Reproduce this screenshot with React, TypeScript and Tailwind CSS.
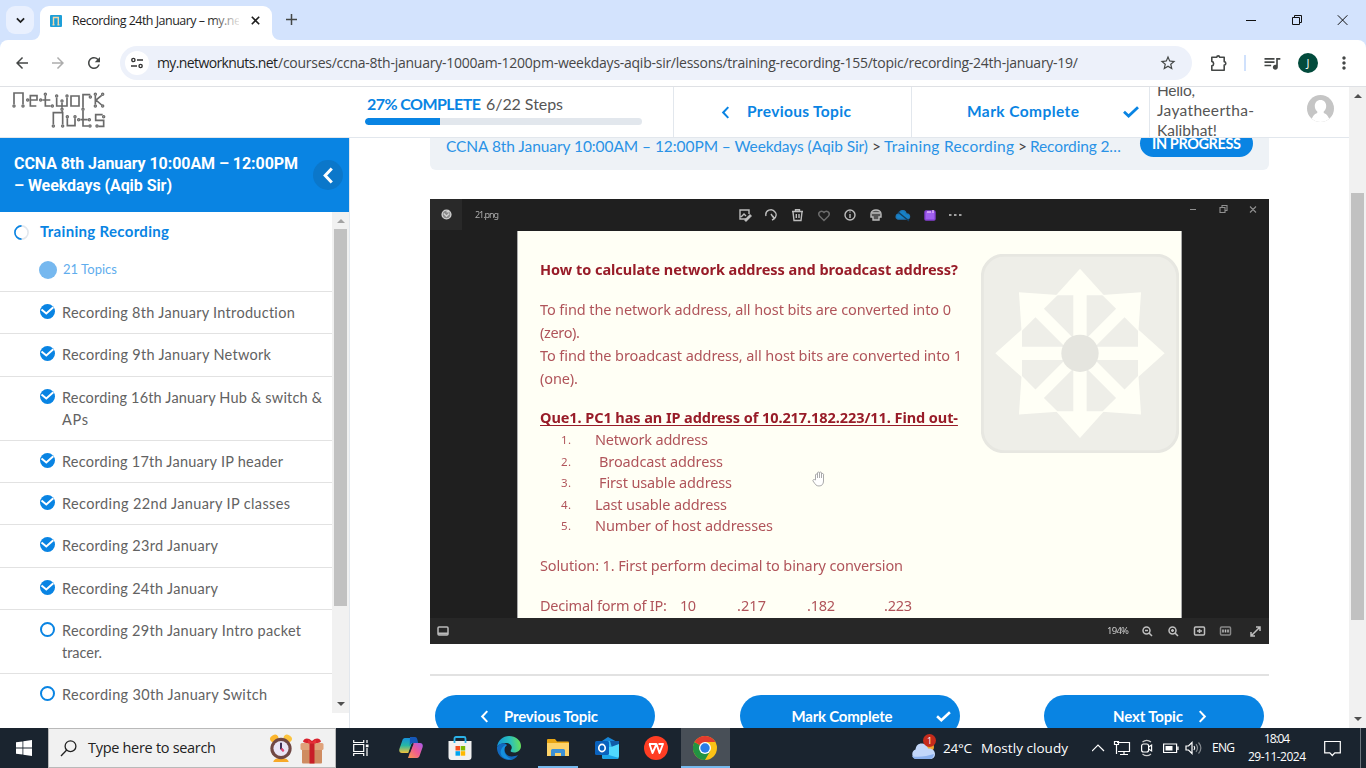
import React, { useLayoutEffect, useRef, useState } from "react";
import {
  MdArrowBack,
  MdArrowForward,
  MdRefresh,
  MdStarBorder,
  MdQueueMusic,
  MdMoreVert,
} from "react-icons/md";

/* Single line of text spread evenly over a given width. */
function Fit({ w, className = "", children }: { w: number; className?: string; children: string }) {
  const ref = useRef<HTMLSpanElement>(null);
  const [spacing, setSpacing] = useState(0);
  useLayoutEffect(() => {
    if (ref.current) {
      const natural = ref.current.getBoundingClientRect().width - spacing * children.length;
      setSpacing((w - natural) / Math.max(1, children.length - 1));
    }
  }, [w, children]);
  return (
    <span className={`inline-block shrink-0 whitespace-pre ${className}`} style={{ width: w }}>
      <span ref={ref} style={{ letterSpacing: spacing }}>
        {children}
      </span>
    </span>
  );
}

function Chevron({ dir, className }: { dir: "left" | "right"; className: string }) {
  return (
    <svg viewBox="0 0 9 14" className={className} fill="none" stroke="currentColor" strokeWidth="2.2">
      <path d={dir === "left" ? "M7.5 1.2 2 7l5.5 5.8" : "M1.5 1.2 7 7l-5.5 5.8"} />
    </svg>
  );
}

function Check({ className }: { className: string }) {
  return (
    <svg viewBox="0 0 16 12" className={className} fill="none" stroke="currentColor" strokeWidth="2.8">
      <path d="M1 5.8 5.6 10 15 1.3" />
    </svg>
  );
}

function TabStrip() {
  return (
    <div className="flex h-10 shrink-0 bg-[#d3e3fd]">
      <div className="ml-1.5 mt-1.5 flex h-7 w-7 items-center justify-center rounded-[9px] bg-[#e9f0fe]">
        <svg viewBox="0 0 10 7" className="h-[7px] w-[9px]" fill="none" stroke="#1f1f1f" strokeWidth="2">
          <path d="M1 1.2 5 5.2 9 1.2" />
        </svg>
      </div>
      <svg viewBox="0 0 8 8" className="-ml-0.5 h-2 w-2 self-end" fill="#fff">
        <path d="M8 0v8H0a8 8 0 0 0 8-8z" />
      </svg>
      <div className="mt-1.5 flex w-[232px] items-center rounded-t-[9px] bg-white pb-[5px] pl-[10px]">
        <svg viewBox="0 0 12 12" className="h-3 w-3" fill="none">
          <rect width="12" height="12" rx="1" fill="#1d9fd8" />
          <path d="M3.500 9.700V2.500h4.800v7.200M2.500 9.700h2M7.400 9.700h2" stroke="#f3d6a8" strokeWidth="1.4" />
        </svg>
        <div className="relative ml-[10px] h-4 w-[167px] overflow-hidden text-[12.5px] leading-4 text-[#1f1f1f]">
          <Fit w={169}>Recording 24th January – my.ne</Fit>
          <div className="absolute inset-y-0 right-0 w-7 bg-gradient-to-r from-white/0 to-white/90" />
        </div>
        <svg viewBox="0 0 9 9" className="ml-[12px] h-[9px] w-[9px]" stroke="#1f1f1f" strokeWidth="1.6">
          <path d="M.8.8l7.4 7.4M8.2.8.8 8.2" />
        </svg>
      </div>
      <svg viewBox="0 0 8 8" className="h-2 w-2 self-end" fill="#fff">
        <path d="M0 0v8h8a8 8 0 0 1-8-8z" />
      </svg>
      <svg viewBox="0 0 11 11" className="ml-[6px] mt-[14px] h-[11px] w-[11px]" stroke="#444746" strokeWidth="1.5">
        <path d="M5.500 0v11M0 5.500h11" />
      </svg>
      <div className="ml-auto flex items-center pr-[18px]">
        <svg viewBox="0 0 102 12" className="h-3 w-[102px]" fill="none" stroke="#111" strokeWidth="1">
          <path d="M0 6.500h10M46.500 3.500h7v7h-7zM48.500 3.500v-2h7v7h-2M91.800 1.300l9.600 9.600M101.400 1.300l-9.600 9.600" />
        </svg>
      </div>
    </div>
  );
}

function Toolbar() {
  return (
    <div className="h-[47px] shrink-0 bg-[#d3e3fd]">
      <div className="flex h-[47px] items-center rounded-t-lg border-b border-[#dfe1e5] bg-white">
        <MdArrowBack className="ml-[13px] h-[18px] w-[18px] text-[#444746]" />
        <MdArrowForward className="ml-[18px] h-[18px] w-[18px] text-[#adadad]" />
        <MdRefresh className="ml-[18px] h-[18px] w-[18px] text-[#444746]" />
        <div className="ml-[17px] flex h-[34px] w-[1072px] items-center rounded-full bg-[#edf1fa] pl-[5px]">
          <div className="flex h-6 w-6 items-center justify-center rounded-full bg-white">
            <svg viewBox="0 0 12 12" className="h-3 w-3" fill="none" stroke="#333" strokeWidth="1.4">
              <circle cx="2.4" cy="3" r="1.6" />
              <circle cx="9.6" cy="9" r="1.6" />
              <path d="M6 3h6M0 9h6" />
            </svg>
          </div>
          <div className="ml-2 flex text-[14px] leading-5">
            <Fit w={121} className="text-[#1f1f1f]">my.networknuts.net</Fit>
            <Fit w={800} className="text-[#474747]">
              /courses/ccna-8th-january-1000am-1200pm-weekdays-aqib-sir/lessons/training-recording-155/topic/recording-24th-january-19/
            </Fit>
          </div>
          <MdStarBorder className="ml-auto mr-[15px] h-[18px] w-[18px] text-[#444746]" />
        </div>
        <svg viewBox="0 0 18 18" className="ml-[18px] h-[18px] w-[18px]" fill="none" stroke="#444746" strokeWidth="1.6" strokeLinejoin="round">
          <path d="M1.800 3.300h5a1.400 1.400 0 0 1 2.800 0h4.600v4.500a1.600 1.600 0 0 1 0 3.200v5.200H1.800v-4.300a2.300 2.300 0 0 0 0-4.500z" />
        </svg>
        <div className="ml-4 h-4 w-[2px] bg-[#d0e1fc]" />
        <MdQueueMusic className="ml-[16px] h-5 w-5 text-[#444746]" />
        <div className="ml-[16px] flex h-5 w-5 items-center justify-center rounded-full bg-[#024b3c] text-[11px] text-white">J</div>
        <MdMoreVert className="ml-4 h-5 w-5 text-[#444746]" />
      </div>
    </div>
  );
}

function Logo() {
  const nodes = [
    [42, 318], [69, 318], [83, 300], [122, 300], [136, 283], [157, 318], [170, 288], [186, 303], [201, 288],
    [186, 328], [249, 328], [271, 291], [286, 283], [308, 283], [308, 318], [286, 318],
    [160, 378], [188, 378], [202, 350], [225, 350], [236, 359], [268, 359], [270, 378], [291, 378], [311, 350],
  ];
  return (
    <svg viewBox="30 270 300 120" className="h-10 w-[100px]" fill="none" stroke="#6a6a6a" strokeWidth="5">
      <path d="M42 313v-34h27v34M88 300h23v-13H91v31h18M127 300h24M136 288v30h16M170 293v25h31v-25M186 308v15M213 288h24v30h-24zM249 323v-39h22M286 288v25M305 286l-17 14 17 15" />
      <path d="M160 373v-35h28v35M188 338l-2-6M202 355v22h23v-22M249 333v45h17M241 359h22M308 344h-21v17h24v18h-16" />
      {nodes.map(([x, y], i) => (
        <circle key={i} cx={x} cy={y} r="3.4" fill="#bbb" strokeWidth="3.6" />
      ))}
    </svg>
  );
}

function SiteHeader() {
  return (
    <div className="flex h-[51px] shrink-0 overflow-hidden border-b border-[#e2e7ed] bg-white text-[#555]">
      <div className="w-[365px] overflow-hidden pl-[10px] pt-[3px]">
        <Logo />
      </div>
      <div className="w-[308px] pt-[7px]">
        <div className="flex h-5 pl-[2px] text-[16px] leading-5">
          <Fit w={114} className="mr-[5px] font-bold text-[#0984e3]">27% COMPLETE</Fit>
          <Fit w={77}>6/22 Steps</Fit>
        </div>
        <div className="mt-1 h-[7px] w-[277px] overflow-hidden rounded-full bg-[#e2e7ed]">
          <div className="h-full w-[75px] rounded-l-full bg-[#0984e3]" />
        </div>
      </div>
      <div className="flex w-[238px] items-center border-l border-[#e2e7ed] pl-[47px] font-bold text-[#0984e3]">
        <Chevron dir="left" className="h-[13px] w-[9px]" />
        <Fit w={104} className="ml-[17px] text-[15.5px]">Previous Topic</Fit>
      </div>
      <div className="flex w-[238px] items-center border-l border-[#e2e7ed] pl-[55px] font-bold text-[#0984e3]">
        <Fit w={112} className="text-[15.5px]">Mark Complete</Fit>
        <Check className="ml-[44px] h-3 w-4" />
      </div>
      <div className="flex w-[200px] items-start border-l border-[#e2e7ed] pl-[7px] text-[15.5px] leading-5">
        <div className="-mt-[7px] flex flex-col">
          <Fit w={38}>Hello,</Fit>
          <Fit w={97}>Jayatheertha-</Fit>
          <Fit w={60}>Kalibhat!</Fit>
        </div>
        <svg viewBox="0 0 26 26" className="ml-[53px] mt-[8px] h-[27px] w-[27px] shrink-0">
          <clipPath id="avatar"><circle cx="13" cy="13" r="13" /></clipPath>
          <g clipPath="url(#avatar)">
            <rect width="26" height="26" fill="#c5c5c5" />
            <path d="M13 4.800c-3.500 0-5.500 2.600-5.500 5.700 0 2.300 1 4.200 2.400 5.300v1.500C7 18.600 4.600 20.500 3.600 27h18.800c-1-6.500-3.400-8.400-6.300-9.700v-1.500c1.400-1.100 2.400-3 2.400-5.300 0-3.100-2-5.700-5.500-5.700z" fill="#fff" />
          </g>
        </svg>
      </div>
    </div>
  );
}

type Topic = { lines: [string, number][]; done: boolean; box: string };
const topics: Topic[] = [
  { lines: [["Recording 8th January Introduction", 233]], done: true, box: "h-[42px] border-b" },
  { lines: [["Recording 9th January Network", 209]], done: true, box: "h-[43px] border-b" },
  { lines: [["Recording 16th January Hub & switch &", 260], ["APs", 26]], done: true, box: "h-16 border-b" },
  { lines: [["Recording 17th January IP header", 221]], done: true, box: "h-[42px] border-b" },
  { lines: [["Recording 22nd January IP classes", 228]], done: true, box: "h-[42px] border-b" },
  { lines: [["Recording 23rd January", 156]], done: true, box: "h-[43px] border-b" },
  { lines: [["Recording 24th January", 156]], done: true, box: "h-[42px] border-b" },
  { lines: [["Recording 29th January Intro packet", 239], ["tracer.", 40]], done: false, box: "h-16 border-b" },
  { lines: [["Recording 30th January Switch", 205]], done: false, box: "h-[39px]" },
];

function Sidebar() {
  return (
    <div className="flex w-[350px] shrink-0 flex-col border-r border-[#e2e7ed]">
      <div className="flex h-[74px] shrink-0 items-center bg-[#0984e3] pl-[14px] font-['Roboto',sans-serif] text-[16px] font-bold leading-[22px] text-white">
        <div className="flex w-[299px] flex-col">
          <Fit w={284}>CCNA 8th January 10:00AM – 12:00PM</Fit>
          <Fit w={158}>– Weekdays (Aqib Sir)</Fit>
        </div>
        <div className="flex h-[30px] w-[30px] items-center justify-center rounded-full bg-[#0b77ca]">
          <svg viewBox="0 0 12 18" className="h-[17px] w-[12px]" fill="none" stroke="#fff" strokeWidth="3.2">
            <path d="M10 1.500 3 9l7 7.500" />
          </svg>
        </div>
      </div>
      <div className="flex h-[501px]">
        <div className="w-[332px] overflow-hidden">
          <div className="h-20 border-b border-[#e2e2e2] pt-[8px]">
            <div className="flex h-[22px] items-center pl-[14px]">
              <svg viewBox="0 0 15 15" className="mt-[2px] h-[15px] w-[15px]" fill="none" strokeWidth="1.6">
                <circle cx="7.500" cy="7.500" r="6.600" stroke="#e2e7ed" />
                <path d="M7.500 14.100a6.600 6.600 0 0 1 0-13.200" stroke="#0984e3" />
              </svg>
              <Fit w={129} className="ml-[11px] text-[15px] font-bold text-[#0984e3]">Training Recording</Fit>
            </div>
            <div className="mt-[17px] flex h-[22px] items-center pl-[39px]">
              <div className="h-[18px] w-[18px] rounded-full bg-[#76b8ef]" />
              <Fit w={54} className="ml-[6px] text-[13px] text-[#5faded]">21 Topics</Fit>
            </div>
          </div>
          {topics.map((t) => (
            <div key={t.lines[0][0]} className={`flex border-[#e2e2e2] pl-10 pt-[10px] ${t.box}`}>
              <svg viewBox="0 0 15 15" className="mt-[2px] h-[15px] w-[15px] shrink-0" fill="none">
                {t.done ? (
                  <>
                    <circle cx="7.500" cy="7.500" r="7.500" fill="#0984e3" />
                    <path d="M1.500 5.500 6.300 9.500 13.300 3.200" stroke="#fff" strokeWidth="2" />
                  </>
                ) : (
                  <circle cx="7.500" cy="7.500" r="6.500" stroke="#0984e3" strokeWidth="2" />
                )}
              </svg>
              <div className="ml-[7px] flex flex-col text-[14.5px] leading-[21.5px] text-[#626262]">
                {t.lines.map(([text, w]) => (
                  <Fit key={text} w={w}>{text}</Fit>
                ))}
              </div>
            </div>
          ))}
        </div>
        <div className="flex w-[17px] flex-col items-center bg-[#f1f1f1]">
          <svg viewBox="0 0 8 4" className="mt-[7px] h-1 w-2 shrink-0" fill="#a3a3a3"><path d="M0 4 4 0l4 4z" /></svg>
          <div className="mt-[6px] h-[377px] w-[13px] shrink-0 bg-[#c1c1c1]" />
          <svg viewBox="0 0 8 4" className="mt-[96px] h-1 w-2 shrink-0" fill="#505050"><path d="M0 0h8L4 4z" /></svg>
        </div>
      </div>
    </div>
  );
}

const steps: [string, string, number, string][] = [
  ["1.", "Network address", 113, "pl-[24px]"],
  ["2.", "Broadcast address", 124, "pl-[28px]"],
  ["3.", "First usable address", 133, "pl-[28px]"],
  ["4.", "Last usable address", 132, "pl-[24px]"],
  ["5.", "Number of host addresses", 178, "pl-[24px]"],
];

function Watermark() {
  return (
    <svg viewBox="425 178 594 597" className="h-[199px] w-[198px]">
      <rect x="429" y="182" width="586" height="589" rx="64" fill="#eeeee8" stroke="#e7e7e1" strokeWidth="9" />
      {[0, 90, 180, 270].map((a) => (
        <path key={a} transform={`rotate(${a} 722 476)`} d="M722 222l72 80h-52v160h-40V302h-52z" fill="#fffff6" />
      ))}
      {[45, 135, 225, 315].map((a) => (
        <path key={a} transform={`rotate(${a} 722 476)`} d="M722 217l77 88h-59v160h-36V305h-59z" fill="#fffff6" />
      ))}
      <circle cx="722" cy="476" r="56" fill="#e5e5df" />
    </svg>
  );
}

function Slide() {
  return (
    <div className="relative h-[387px] w-[663px] overflow-hidden bg-[#fffff5] pl-[22px] text-[14.5px] leading-[23px] text-[#b0545a]">
      <div className="flex h-[387px] flex-col pt-[27px] blur-[0.7px]">
        <Fit w={418} className="h-[23px] font-bold text-[#981c28]">How to calculate network address and broadcast address?</Fit>
        <Fit w={411} className="mt-[17px] h-[23px]">To find the network address, all host bits are converted into 0</Fit>
        <Fit w={40} className="h-[23px]">(zero).</Fit>
        <Fit w={422} className="h-[23px]">To find the broadcast address, all host bits are converted into 1</Fit>
        <Fit w={38} className="h-[23px]">(one).</Fit>
        <Fit w={418} className="mt-[16px] h-[23px] font-bold text-[#981c28] underline underline-offset-2">
          Que1. PC1 has an IP address of 10.217.182.223/11. Find out-
        </Fit>
        {steps.map(([n, text, w, pad]) => (
          <div key={n} className="flex h-[21.5px] pl-[21px] leading-[21.5px]">
            <Fit w={10} className="text-[11.5px]">{n}</Fit>
            <div className={pad}><Fit w={w}>{text}</Fit></div>
          </div>
        ))}
        <Fit w={363} className="mt-[17px] h-[23px]">Solution: 1. First perform decimal to binary conversion</Fit>
        <div className="mt-[17px] flex">
          <Fit w={127}>Decimal form of IP:</Fit>
          <Fit w={16} className="ml-[13px]">10</Fit>
          <Fit w={29} className="ml-[41px]">.217</Fit>
          <Fit w={28} className="ml-[41px]">.182</Fit>
          <Fit w={28} className="ml-[49px]">.223</Fit>
        </div>
      </div>
      <div className="absolute left-[463px] top-[23px] blur-[0.7px]"><Watermark /></div>
      <svg viewBox="0 0 14 16" className="absolute left-[294px] top-[240px] h-4 w-[14px] blur-[0.6px]" fill="#fff" stroke="#aaa" strokeWidth="1">
        <path d="M3.500 9V4a1 1 0 0 1 2 0V2a1 1 0 0 1 2 0 1 1 0 0 1 2 0v1a1 1 0 0 1 2 1v6c0 3-1.500 5-4.500 5S3.500 13.500 1 10c-.6-1.300 1-2 2.500-1zM5.500 4v3M7.500 2v5M9.500 3v4" />
      </svg>
    </div>
  );
}

function Video() {
  return (
    <div className="flex h-[445px] w-[839px] flex-col bg-[#1f1f1f] font-['Noto_Sans','Open_Sans',sans-serif]">
      <div className="relative flex h-8 shrink-0">
        <div className="flex h-[31px] w-8 items-center justify-center bg-[#292929]">
          <svg viewBox="0 0 12 12" className="h-[11px] w-[11px] blur-[0.6px]" fill="#888" stroke="#d0d0d0" strokeWidth="1.5">
            <circle cx="6" cy="6" r="4.800" /><path d="M3 5l3 3 3-3M6 3h3" />
          </svg>
        </div>
        <Fit w={24} className="ml-[13px] text-[9px] leading-8 text-[#aaa] blur-[0.7px]">21.png</Fit>
        <svg viewBox="0 0 224 14" className="ml-[239px] mt-[9px] h-[14px] w-[224px] blur-[0.6px]" fill="none" stroke="#bcbcbc" strokeWidth="1.4">
          <path d="M8 11H2V2h9v4M3 9l3-3 2 2" /><path d="M7 12l5-5 1 1-5 5z" fill="#ddd" />
          <path d="M28 8a5 5 0 0 1 9-4c2 2 1 5-1 7M34 12l2-1-1-3M33 6l2 3" />
          <path d="M54 3.500h11M57.500 3V1.800h4V3M55 4l1 8.500h7L64 4M58.300 6v4M61 6v4" />
          <path d="M86 12.500 81.500 8C79 4.500 83.500 1.500 86 4.500 88.500 1.500 93 4.500 90.500 8z" stroke="#6b6b6b" />
          <circle cx="112" cy="7" r="5" /><path d="M112 6v4M112 3.500v1" />
          <path d="M133 6a5 4 0 0 1 10 0v3h-2v3h-6V9h-2zM134 5h8" fill="#555" />
          <path d="M160 11c-3-1-2-5 1-5 1-5 7-4 7 0 4-1 5 5 1 5z" fill="#1683c9" stroke="#1f77b7" /><path d="M160 4l11 9" stroke="#163d5c" />
          <rect x="187" y="3" width="10" height="9" rx="1" fill="#a060ee" stroke="#8742d6" /><path d="M189 4h4M195 2v3" stroke="#e1b6fa" />
          <path d="M211 7h2.500M216 7h2.500M221 7h2.500" stroke="#ccc" strokeWidth="1.7" />
        </svg>
        <svg viewBox="0 0 68 10" className="ml-[228px] mt-[5px] h-[10px] w-[68px] blur-[0.5px]" fill="none" stroke="#909090" strokeWidth="1.1">
          <path d="M0 5.500h6M30 3.500h5v5h-5zM32 3V1.500h5v5h-2M60 2.500l6 6M66 2.500l-6 6" />
        </svg>
      </div>
      <div className="ml-[87px] w-[665px] border-x border-[#aaa]"><Slide /></div>
      <div className="flex h-[26px] shrink-0 items-center bg-[#272727] pl-[7px]">
        <svg viewBox="0 0 12 10" className="h-[10px] w-3 blur-[0.5px]" fill="none" stroke="#bbb" strokeWidth="1.500"><rect x="1" y="1" width="10" height="8" rx="1" /><path d="M1 7.500h10" strokeWidth="2" /></svg>
        <Fit w={22} className="ml-[658px] text-[9.5px] text-[#ccc] blur-[0.6px]">194%</Fit>
        <svg viewBox="0 0 122 14" className="ml-[11px] h-[14px] w-[122px] blur-[0.5px]" fill="none" stroke="#c0c0c0" strokeWidth="1.5">
          <circle cx="6.500" cy="6.500" r="3.500" /><path d="M9 9l3 3M5 6.500h3" />
          <circle cx="32.500" cy="6.500" r="3.500" /><path d="M35 9l3 3M31 6.500h3M32.500 5v3" />
          <rect x="54.500" y="3" width="10" height="8" rx="1" /><path d="M57 7h5M59.500 5v4" />
          <rect x="80.500" y="3" width="10" height="8" rx="1" stroke="#888" /><path d="M83 5.500v3M88 5.500v3M85.500 5.500v3" />
          <path d="M111 8v4h4M116 3h4v4M111.500 11.500l8-8" />
        </svg>
      </div>
    </div>
  );
}

function Main() {
  return (
    <div className="flex w-[999px] shrink-0 flex-col overflow-hidden pl-20">
      <div className="flex h-8 w-[839px] shrink-0 rounded-b-md bg-[#eef2f6] pl-4 text-[15.5px] leading-5 text-[#444]">
        <div className="-mt-[2px] flex w-[694px] text-[#2a92e6]">
          <Fit w={422}>CCNA 8th January 10:00AM – 12:00PM – Weekdays (Aqib Sir)</Fit>
          <Fit w={8} className="mx-[4px] text-[#444]">&gt;</Fit>
          <Fit w={130}>Training Recording</Fit>
          <Fit w={8} className="mx-[4px] text-[#444]">&gt;</Fit>
          <Fit w={91}>Recording 2…</Fit>
        </div>
        <div className="-mt-2 flex h-[27px] w-[113px] items-center justify-center rounded-full bg-[#0984e3] text-[14.5px] font-bold text-white">
          <Fit w={89}>IN PROGRESS</Fit>
        </div>
      </div>
      <div className="mt-[29px]"><Video /></div>
      <div className="mt-[30px] h-[2px] w-[839px] shrink-0 bg-[#e2e2e2]" />
      <div className="ml-[5px] mt-[19px] flex w-[829px] shrink-0 justify-between text-[15px] font-bold text-white">
        <div className="flex h-[42px] w-[220px] items-center rounded-full bg-[#0984e3] pl-[45px]">
          <Chevron dir="left" className="h-[13px] w-[9px]" />
          <Fit w={94} className="ml-[15px]">Previous Topic</Fit>
        </div>
        <div className="flex h-[42px] w-[220px] items-center rounded-full bg-[#0984e3] pl-[52px]">
          <Fit w={101}>Mark Complete</Fit>
          <Check className="ml-[43px] mt-px h-[11px] w-[15px]" />
        </div>
        <div className="flex h-[42px] w-[220px] items-center rounded-full bg-[#0984e3] pl-[69px]">
          <Fit w={70}>Next Topic</Fit>
          <Chevron dir="right" className="ml-[15px] h-[13px] w-[9px]" />
        </div>
      </div>
    </div>
  );
}

function AlarmClock() {
  return (
    <svg viewBox="0 0 24 30" className="h-[29px] w-[24px]">
      <ellipse cx="5" cy="4.500" rx="4.500" ry="3.500" fill="#fbb52d" transform="rotate(-30 5 4.500)" />
      <ellipse cx="19" cy="4.500" rx="4.500" ry="3.500" fill="#fbc33d" transform="rotate(30 19 4.500)" />
      <path d="M4 29c1-4 4-4 8-4s7 0 8 4z" fill="#f7a928" />
      <circle cx="12" cy="15" r="11" fill="#704744" />
      <circle cx="12" cy="15" r="7.800" fill="#e9e4f5" />
      <path d="M12 9v6l2.500 2.500" fill="none" stroke="#3b2b50" strokeWidth="2" />
      <path d="M12.500 15l2.300 3" stroke="#f04472" strokeWidth="2" />
    </svg>
  );
}

function Gift() {
  return (
    <svg viewBox="0 0 24 26" className="h-[26px] w-[24px]">
      <path d="M12 6C8 5 4 5 3 3.500 4 0 8-1 12 3c4-4 8-3 9 .500C20 5 16 5 12 6z" fill="#d9232e" />
      <rect x="2" y="9" width="20" height="16.500" rx="1" fill="#cf8c61" />
      <rect x=".5" y="5" width="23" height="7" rx="1.500" fill="#e0a27a" />
      <path d="M9.500 4.500h5v21h-5z" fill="#c81e28" />
      <path d="M8 1.500l4 3 4-3v4H8z" fill="#e8323a" />
    </svg>
  );
}

const apps: { id: string; cell: string; bar: string; icon: React.ReactNode }[] = [
  {
    id: "copilot", cell: "", bar: "",
    icon: (
      <svg viewBox="0 0 24 22" className="h-[22px] w-6">
        <defs>
          <linearGradient id="ca" x1="0" y1="0" x2="0" y2="1"><stop offset="0" stopColor="#1691dc" /><stop offset=".5" stopColor="#28b8a2" /><stop offset="1" stopColor="#f4c33a" /></linearGradient>
          <linearGradient id="cb" x1="1" y1="0" x2="0" y2="1"><stop offset="0" stopColor="#a75af0" /><stop offset=".5" stopColor="#ef5b91" /><stop offset="1" stopColor="#fb9a4b" /></linearGradient>
        </defs>
        <path d="M7 1h8l-4.500 13c-.5 1.500-1 2-2.500 2H3c-2.500 0-3.300-2-2.500-4.500L3.500 3C4 1.500 5 1 7 1z" fill="url(#ca)" />
        <path d="M11 0h5c1.500 0 2 1 2.500 3l.7 3h-5c-2 0-3 1-3.500 3z" fill="#1557b8" />
        <path d="M17 21H9l4.500-13c.5-1.500 1-2 2.500-2h5c2.500 0 3.300 2 2.500 4.500L20.500 19c-.5 1.500-1.500 2-3.500 2z" fill="url(#cb)" />
        <path d="M9.500 15.500 12.500 7l2 0-3.500 9z" fill="#1a242f" />
      </svg>
    ),
  },
  {
    id: "store", cell: "", bar: "",
    icon: (
      <svg viewBox="0 0 24 24" className="h-6 w-6">
        <path d="M.5 5h23v16a3 3 0 0 1-3 3h-17a3 3 0 0 1-3-3z" fill="#f1f1f1" />
        <path d="M6.500 7V2.500a1.500 1.500 0 0 1 1.500-1.500h8a1.500 1.500 0 0 1 1.500 1.500V7" fill="none" stroke="#2bb2e8" strokeWidth="1.800" />
        <path d="M7.500 10H12v4.500H7.500z" fill="#f25022" /><path d="M12.700 10h4.500v4.500h-4.500z" fill="#7fba00" />
        <path d="M7.500 15.200H12v4.500H7.500z" fill="#00a4ef" /><path d="M12.700 15.200h4.500v4.500h-4.500z" fill="#ffb900" />
      </svg>
    ),
  },
  {
    id: "edge", cell: "", bar: "",
    icon: (
      <svg viewBox="0 0 24 24" className="h-6 w-6">
        <defs>
          <linearGradient id="ea" x1="0" y1=".4" x2="1" y2=".3"><stop offset="0" stopColor="#1295d8" /><stop offset=".55" stopColor="#2ac0bd" /><stop offset="1" stopColor="#6be254" /></linearGradient>
        </defs>
        <path d="M0 11C1 4 6 0 12 0c7 0 12 4.500 12 10 0 4-3 6.500-7 6.500-3 0-4-1-3-2.500 2-3 0-7-5-7-4 0-8 2-9 4z" fill="url(#ea)" />
        <path d="M0 11c2-4 8-5 10-2-2 1-3 4-2 7 1.500 4 6 6 13 3-2 3.500-5 5-9 5C5 24-.5 18 0 11z" fill="#1269bd" />
        <path d="M10 9c-3 2-4 6-1 10 2 3 5 4.500 8 4C8 25 2 20 4 14c1-3 3-5 6-5z" fill="#1490df" />
      </svg>
    ),
  },
  {
    id: "explorer", cell: "", bar: "w-10",
    icon: (
      <svg viewBox="0 0 22 20" className="h-5 w-[22px]">
        <path d="M0 2a1 1 0 0 1 1-1h7l2 2.500H21a1 1 0 0 1 1 1V17H0z" fill="#e8a513" />
        <path d="M0 5h22v13H0z" fill="#fdd36a" />
        <path d="M4 18v-5.500a1.500 1.500 0 0 1 1.500-1.500h11a1.500 1.500 0 0 1 1.500 1.500V18h-4v-3H8v3z" fill="#3c91d6" />
      </svg>
    ),
  },
  {
    id: "outlook", cell: "", bar: "",
    icon: (
      <svg viewBox="0 0 24 22" className="h-[22px] w-6">
        <path d="M4 6 13 0l11 6v3H4z" fill="#1686d9" />
        <path d="M8 4h13v8H8z" fill="#35b8f1" /><path d="M15 4h9v6l-6 4z" fill="#105ba9" />
        <path d="M7 10h9l8-3v12a3 3 0 0 1-3 3H9a2 2 0 0 1-2-2z" fill="#50d9ff" />
        <path d="M7 16l17 5c-1 1-2 1-3 1H9a2 2 0 0 1-2-2z" fill="#1aa4e8" />
        <rect y="4" width="14" height="14" rx="1.500" fill="#0a62bd" />
        <ellipse cx="7" cy="11" rx="3.200" ry="3.600" fill="none" stroke="#fff" strokeWidth="1.700" />
      </svg>
    ),
  },
  {
    id: "wps", cell: "", bar: "",
    icon: (
      <svg viewBox="0 0 24 24" className="h-6 w-6" fill="none">
        <circle cx="12" cy="12" r="12" fill="#ff3d23" />
        <path d="M5 8h7.500M5.500 8l3 9 4-9 3 9 3.500-9h-4.500" stroke="#fff" strokeWidth="1.900" strokeLinejoin="round" />
      </svg>
    ),
  },
  {
    id: "chrome", cell: "bg-[#484f57]", bar: "w-[49px]",
    icon: (
      <svg viewBox="0 0 24 24" className="h-6 w-6">
        <circle cx="12" cy="12" r="12" fill="#fbc116" />
        <path d="M12 12 1.600 6A12 12 0 0 0 12 24l5.200-9z" fill="#229342" />
        <path d="M12 12 1.600 6a12 12 0 0 1 20.800 0H12z" fill="#e33b2e" />
        <circle cx="12" cy="12" r="6" fill="#fff" /><circle cx="12" cy="12" r="4.700" fill="#2a7de9" />
      </svg>
    ),
  },
];

function Taskbar() {
  return (
    <div className="flex h-10 shrink-0 bg-[#1a242f] font-['Open_Sans','Noto_Sans',sans-serif] text-white">
      <div className="flex w-12 items-center justify-center">
        <svg viewBox="0 0 16 16" className="h-4 w-4" fill="#fff"><path d="M0 2.300 6.500 1.400v6.200H0zM7.300 1.300 16 0v7.600H7.300zM0 8.400h6.500v6.200L0 13.700zM7.300 8.400H16V16l-8.700-1.300z" /></svg>
      </div>
      <div className="flex w-72 items-center border border-[#b9b9b9] bg-[#f1f1f1] text-[#222]">
        <svg viewBox="0 0 17 17" className="ml-[11px] h-[17px] w-[17px]" fill="none" stroke="#222" strokeWidth="1.300"><circle cx="10.500" cy="6.200" r="5.400" /><path d="M6.700 10 1 16" /></svg>
        <Fit w={128} className="ml-[11px] text-[14.5px]">Type here to search</Fit>
        <div className="ml-[53px]"><AlarmClock /></div>
        <div className="ml-[7px] mt-[5px]"><Gift /></div>
      </div>
      <div className="flex w-[49.500px] items-center justify-center">
        <svg viewBox="0 0 16 16" className="h-4 w-4" fill="none" stroke="#fff" strokeWidth="1.200"><path d="M.7 0v2.500h10V0M.7 16v-2.500h10V16M.7 4.500h10v7H.7zM14 0v3M14 8v8" /><path d="M12.800 4.500h2.700v2.700h-2.700z" fill="#fff" stroke="none" /></svg>
      </div>
      <div className="flex pl-px">
        {apps.map((a) => (
          <div key={a.id} className={`relative flex w-[49px] items-center justify-center ${a.cell}`}>
            {a.icon}
            {a.bar && <div className={`absolute bottom-0 h-[2px] bg-[#76b9ed] ${a.bar}`} />}
          </div>
        ))}
      </div>
      <div className="ml-auto flex items-center">
        <div className="relative h-6 w-6">
          <svg viewBox="0 0 24 24" className="h-6 w-6">
            <circle cx="18" cy="11" r="5" fill="#f2a52c" />
            <path d="M5 23a5 5 0 0 1-.5-9.500C5 9 8 7 11.500 7.500c3 .3 5 2.500 5.500 5C21 12 24 14.500 24 18s-2 5-5 5z" fill="#c2d7fa" />
            <path d="M1 20c6 2 15 0 22-2-.5 3-2 5-4 5H5c-2 0-3.500-1.500-4-3z" fill="#8bb1ee" />
          </svg>
          <div className="absolute -top-[2px] left-[12px] flex h-[13px] w-[13px] items-center justify-center rounded-full bg-[#c42b1c] text-[9px]">1</div>
        </div>
        <Fit w={29} className="ml-[8px] text-[13.5px]">24°C</Fit>
        <Fit w={87} className="ml-[9px] text-[13.5px]">Mostly cloudy</Fit>
        <svg viewBox="0 0 110 18" className="ml-[24px] h-[18px] w-[110px]" fill="none" stroke="#fff" strokeWidth="1.200">
          <path d="M0 12 6 6l6 6" />
          <path d="M25 3.500h12.500v9H26M22.500 2.500h4v3h-4zM24.500 5.500V15M32 12.500v3M28 15.500h8" />
          <path d="M50.500 3c2.500-2 6-2 8.500 0M50.500 15c2.500 2 6 2 8.500 0" stroke="#ccc" /><rect x="49.600" y="5" width="7" height="8" rx="2" /><path d="M56.600 8l3-2v6l-3-2" />
          <path d="M71.600 5h13v8.500h-13zM86 7.500v3.500" /><path d="M73.500 7h7v4.500h-7z" fill="#fff" stroke="none" />
          <path d="M94 7h2.500L100 3.500v11L96.500 11H94zM102 7c1 1.300 1 2.700 0 4" /><path d="M104 5.200c2 2.500 2 5 0 7.600M106.500 3.500c3 3.500 3 7.500 0 11" stroke="#84898e" />
        </svg>
        <Fit w={23} className="ml-[10px] text-[12px]">ENG</Fit>
        <div className="ml-[13px] flex flex-col items-center text-[12px] leading-[18px]">
          <Fit w={26}>18:04</Fit>
          <Fit w={58}>29-11-2024</Fit>
        </div>
        <svg viewBox="0 0 17 17" className="ml-[18px] h-[17px] w-[17px]" fill="none" stroke="#fff" strokeWidth="1.200"><path d="M.7 1.500h15.600v11.300h-5.500L8.300 15.500l-2.500-2.700H.7z" /></svg>
        <div className="ml-[19px] mr-[5px] h-10 w-px bg-[#6c747c]" />
      </div>
    </div>
  );
}

export default function App() {
  return (
    <div className="flex h-[768px] w-[1366px] flex-col overflow-hidden bg-white font-['Open_Sans','Noto_Sans',sans-serif]">
      <TabStrip />
      <Toolbar />
      <div className="flex h-[641px] shrink-0 overflow-hidden font-['Lato','Open_Sans',sans-serif]">
        <div className="flex w-[1349px] flex-col overflow-hidden">
          <SiteHeader />
          <div className="flex h-[590px]">
            <Sidebar />
            <Main />
          </div>
        </div>
        <div className="flex w-[17px] flex-col items-center bg-[#f1f1f1]">
          <svg viewBox="0 0 8 4" className="mt-[7px] h-1 w-2 shrink-0" fill="#505050"><path d="M0 4 4 0l4 4z" /></svg>
          <div className="mt-[95px] h-[427px] w-[13px] shrink-0 bg-[#c1c1c1]" />
          <svg viewBox="0 0 8 4" className="mt-[97px] h-1 w-2 shrink-0" fill="#505050"><path d="M0 0h8L4 4z" /></svg>
        </div>
      </div>
      <Taskbar />
    </div>
  );
}
